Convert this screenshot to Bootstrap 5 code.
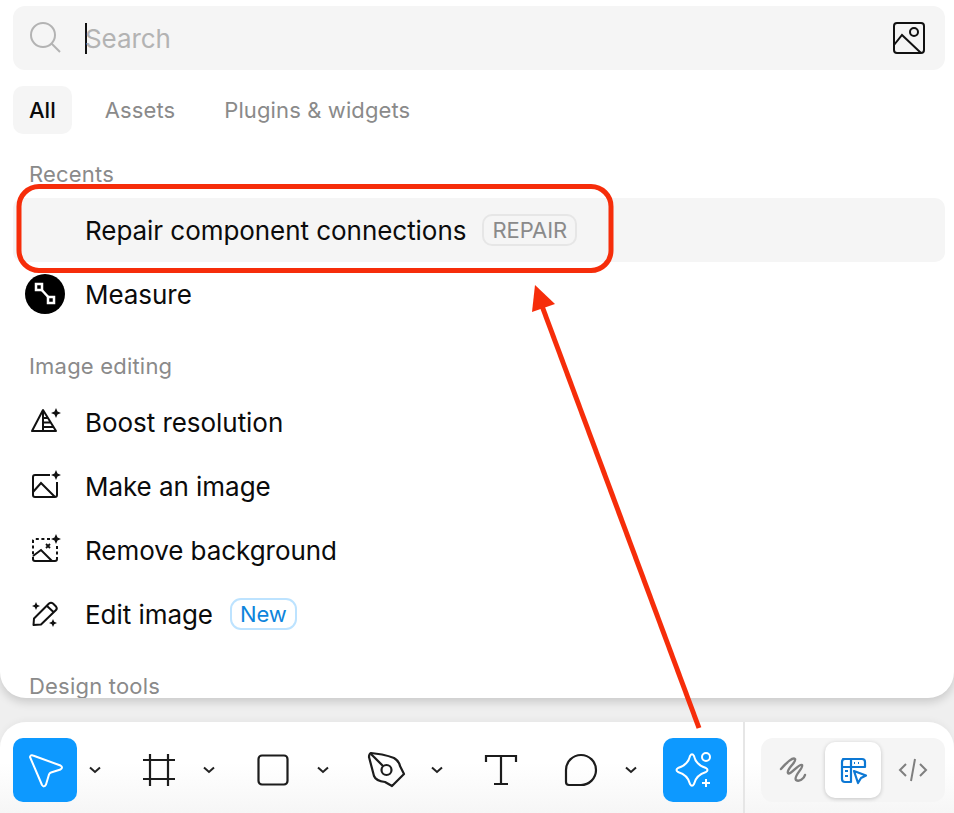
<!doctype html>
<html lang="en">
<head>
<meta charset="utf-8">
<title>Actions menu</title>
<link rel="stylesheet" href="https://cdn.jsdelivr.net/npm/bootstrap@5.3.0/dist/css/bootstrap.min.css">
<style>
html,body{height:100%}
body{width:954px;height:813px;overflow:hidden;background:#efefef;font-family:Inter,"Liberation Sans",sans-serif;font-size:24px;color:#0b0b0b;position:relative}
.panel-top{height:698px;overflow:hidden;background:#fff;border-radius:0 0 26px 26px;padding:6px 9px 0 13px;box-shadow:0 4px 10px rgba(0,0,0,.16)}
.search-box{height:64px;background:#f5f5f5;border-radius:12px;padding:0 20px 0 17px}
.search-gap{width:23px}
.caret-bar{width:2px;height:31px;background:#111}
.search-word{color:#b3b3b3;margin-left:-2px;font-size:26px;letter-spacing:-.1px}
.tab-row{height:48px;margin-top:16px}
.tab-item{height:48px;display:flex;align-items:center;padding:0 16px;border-radius:10px;color:#8a8a8a;font-size:22px;letter-spacing:.12px}
.tab-item.is-on{background:#f5f5f5;color:#0b0b0b;font-weight:500;margin-right:17px;letter-spacing:0}
.tab-item.tab-gap{margin-right:17px}
.sec-label{height:48px;display:flex;align-items:center;padding-left:16px;color:#8a8a8a;font-size:22px;letter-spacing:.2px}
.sec-next{margin-top:16px}
.menu-row{height:64px;border-radius:10px;display:flex;align-items:center;font-size:26px;letter-spacing:-.05px}
.menu-row.is-hl{background:#f5f5f5}
.icon-slot{width:72px;flex:none;display:flex;align-items:center;justify-content:center;padding-right:8px}
.tag-grey,.tag-new{height:32px;display:flex;align-items:center;margin-left:16px;border-radius:10px;border:2px solid #e6e6e6;padding:0 8px;font-size:22px;color:#8a8a8a}
.tag-new{border-color:#bde3ff;color:#0d84dc;border-radius:11px;margin-left:17px}
.tool-bar{height:91px;margin-top:24px;background:linear-gradient(#fff 45%,#f6f6f6);border-radius:26px 26px 0 0;padding:16px 9px 0 13px;box-shadow:0 -2px 6px rgba(0,0,0,.04)}
.tool-btn{width:64px;height:64px;flex:none;display:flex;align-items:center;justify-content:center;border-radius:10px}
.tool-btn.is-blue{background:#0d99ff}
.tool-chev{width:50px;flex:none;height:64px;display:flex;align-items:center;justify-content:flex-start;padding-left:12px}
.tool-space{width:16px;flex:none}
.tool-sep{width:2px;height:91px;margin-top:-16px;background:#e6e6e6;margin-left:16px;margin-right:16px;flex:none}
.seg-wrap{width:184px;height:64px;background:#f5f5f5;border-radius:12px;padding:4px 0;justify-content:center;flex:none}
.seg-btn{width:56px;height:56px;border-radius:10px;display:flex;align-items:center;justify-content:center;margin:0 2px}
.seg-btn.is-on{background:#fff;box-shadow:0 1px 4px rgba(0,0,0,.2)}
.over-marks{position:absolute;left:0;top:0;pointer-events:none}
svg{display:block;overflow:visible}
</style>
</head>
<body>
<div class="panel-top">
  <div class="search-box d-flex align-items-center">
    <svg width="32" height="32" viewBox="0 0 32 32" fill="none" stroke="#b3b3b3" stroke-width="2"><circle cx="13" cy="13" r="12"/><path d="M21.500 21.500 30 30"/></svg>
    <div class="search-gap"></div>
    <div class="caret-bar"></div>
    <div class="search-word flex-grow-1">Search</div>
    <svg width="32" height="32" viewBox="0 0 32 32" fill="none" stroke="#111" stroke-width="2"><rect x="1" y="1" width="30" height="30" rx="3"/><circle cx="21" cy="10" r="4"/><path d="M1 23 9 13 28 31"/></svg>
  </div>
  <div class="tab-row d-flex align-items-center">
    <div class="tab-item is-on">All</div>
    <div class="tab-item tab-gap">Assets</div>
    <div class="tab-item">Plugins &amp; widgets</div>
  </div>
  <div class="sec-label sec-next">Recents</div>
  <div class="menu-row is-hl"><div class="icon-slot"></div>Repair component connections<span class="tag-grey">REPAIR</span></div>
  <div class="menu-row">
    <div class="icon-slot"><svg width="40" height="40" viewBox="0 0 40 40"><circle cx="20" cy="20" r="20" fill="#000"/><path d="M14 13 26 26" stroke="#fff" stroke-width="2.500"/><rect x="11" y="10" width="6" height="6" fill="#000" stroke="#fff" stroke-width="2.500"/><rect x="23" y="23" width="6" height="6" fill="#000" stroke="#fff" stroke-width="2.500"/></svg></div>
    Measure</div>
  <div class="sec-label sec-next">Image editing</div>
  <div class="menu-row">
    <div class="icon-slot"><svg width="32" height="26" viewBox="0 0 32 26" fill="none" stroke="#111" stroke-width="2" stroke-linejoin="round"><path d="M14 1 3 22H27L14 1ZM14 1V22M14 9H19M14 13.500H22M14 18H25"/><path d="M27 -1 28.500 2.500 32 4 28.500 5.500 27 9 25.500 5.500 22 4 25.500 2.500Z" fill="#111" stroke="none"/></svg></div>
    Boost resolution</div>
  <div class="menu-row">
    <div class="icon-slot"><svg width="32" height="32" viewBox="0 -2 32 32" fill="none" stroke="#111" stroke-width="2"><path d="M21 3H6Q4 3 4 5V23Q4 25 6 25H26Q28 25 28 23V10"/><path d="M4 20 12 11 26 25"/><path d="M27 -2 28.500 1.500 32 3 28.500 4.500 27 8 25.500 4.500 22 3 25.500 1.500Z" fill="#111" stroke="none"/></svg></div>
    Make an image</div>
  <div class="menu-row">
    <div class="icon-slot"><svg width="32" height="32" viewBox="0 -2 32 32" fill="none" stroke="#111" stroke-width="2"><path d="M21 3H6Q4 3 4 5V23M28 10V23" stroke-dasharray="3 2.600"/><path d="M4 20 12 14 23 25M4 22V23Q4 25 6 25H26Q28 25 28 23V21"/><path d="M17 8 21 12M21 8 17 12" stroke-width="1.800"/><path d="M27 -2 28.500 1.500 32 3 28.500 4.500 27 8 25.500 4.500 22 3 25.500 1.500Z" fill="#111" stroke="none"/></svg></div>
    Remove background</div>
  <div class="menu-row">
    <div class="icon-slot"><svg width="32" height="30" viewBox="0 0 32 30" fill="none" stroke="#111" stroke-width="2" stroke-linejoin="round"><path d="M4.500 26 5 19.500 20 4.500Q22 3 24 4.500L27 7.500Q28.500 9.500 27 11L12 25.500ZM18 7 25 13.500"/><path d="M7 3 8.200 5.800 11 7 8.200 8.200 7 11 5.800 8.200 3 7 5.800 5.800ZM24 20 25.200 22.800 28 24 25.200 25.200 24 28 22.800 25.200 20 24 22.800 22.800Z" fill="#111" stroke="none"/></svg></div>
    Edit image<span class="tag-new">New</span></div>
  <div class="sec-label sec-next">Design tools</div>
</div>
<div class="tool-bar d-flex">
  <div class="tool-btn is-blue"><svg width="36" height="36" viewBox="0 0 36 36" fill="none" stroke="#fff" stroke-width="2" stroke-linejoin="round"><path d="M3 5Q3.500 2.500 6 3.500L33.500 13.500Q36.500 15.500 33.500 17.500L24 20.500Q22.500 21 22 22.500L19 32.500Q17 36 15 33Z"/></svg></div>
  <div class="tool-chev"><svg width="12" height="8" viewBox="0 0 12 8" fill="none" stroke="#222" stroke-width="2"><path d="M1 1.500 6 6 11 1.500"/></svg></div>
  <div class="tool-btn"><svg width="34" height="34" viewBox="0 0 34 34" fill="none" stroke="#1c1c1c" stroke-width="2.200"><path d="M8 1V33M26 1V33M1 7H33M1 26H33"/></svg></div>
  <div class="tool-chev"><svg width="12" height="8" viewBox="0 0 12 8" fill="none" stroke="#222" stroke-width="2"><path d="M1 1.500 6 6 11 1.500"/></svg></div>
  <div class="tool-btn"><svg width="32" height="32" viewBox="0 0 32 32" fill="none" stroke="#1c1c1c" stroke-width="2.200"><rect x="1.500" y="1.500" width="29" height="29" rx="3.500"/></svg></div>
  <div class="tool-chev"><svg width="12" height="8" viewBox="0 0 12 8" fill="none" stroke="#222" stroke-width="2"><path d="M1 1.500 6 6 11 1.500"/></svg></div>
  <div class="tool-btn"><svg width="38" height="36" viewBox="0 0 38 36" fill="none" stroke="#1c1c1c" stroke-width="2.200" stroke-linejoin="round"><path d="M3 1 14 2.500Q21 4 26 6 31 9 32 14L36 22 24 34 17 30Q8 29 6 24L1 5Q1 2 3 1Z"/><path d="M3 2 15 14"/><circle cx="18.500" cy="18" r="5"/></svg></div>
  <div class="tool-chev"><svg width="12" height="8" viewBox="0 0 12 8" fill="none" stroke="#222" stroke-width="2"><path d="M1 1.500 6 6 11 1.500"/></svg></div>
  <div class="tool-btn"><svg width="34" height="32" viewBox="0 0 34 32" fill="none" stroke="#1c1c1c" stroke-width="2.200"><path d="M2 8V2H32V8M17 2V30M10 30H24"/></svg></div>
  <div class="tool-space"></div>
  <div class="tool-btn"><svg width="34" height="34" viewBox="0 0 34 34" fill="none" stroke="#1c1c1c" stroke-width="2.200"><path d="M2 17A15 15 0 1 1 17 32H5Q2 32 2 29Z"/></svg></div>
  <div class="tool-chev"><svg width="12" height="8" viewBox="0 0 12 8" fill="none" stroke="#222" stroke-width="2"><path d="M1 1.500 6 6 11 1.500"/></svg></div>
  <div class="tool-btn is-blue"><svg width="40" height="40" viewBox="0 0 40 40" fill="none" stroke="#fff" stroke-width="2" stroke-linejoin="round"><path d="M15 6Q17 2.500 19 6 21 15 31 18Q34 20 31 22 21 25 19 34Q17 37.500 15 34 13 25 3 22Q0 20 3 18 13 15 15 6Z"/><circle cx="31" cy="7" r="4"/><path d="M31 29V37M27 33H35"/></svg></div>
  <div class="tool-sep"></div>
  <div class="seg-wrap d-flex">
    <div class="seg-btn"><svg width="28" height="28" viewBox="0 0 28 28" fill="none" stroke="#7f7f7f" stroke-width="2.400" stroke-linecap="round"><path d="M2 13C8 6 14 1 16 3 18 6 7 13 9 17 11 20 20 7 23 9 25 12 14 20 17 24 20 26 25 23 26 19"/></svg></div>
    <div class="seg-btn is-on"><svg width="28" height="28" viewBox="0 0 28 28" fill="none" stroke="#0d78d4" stroke-width="2.200" stroke-linejoin="round"><path d="M4 3H23Q26 3 26 6V11H12V26H6Q3 26 3 23V6Q3 3 6 3ZM3 11H12V3M15 7H16M19 7H20M6 15H9M6 20H9"/><path d="M15 15 27 19.500 22 22 19 27Z"/></svg></div>
    <div class="seg-btn"><svg width="28" height="24" viewBox="0 0 28 24" fill="none" stroke="#7f7f7f" stroke-width="2"><path d="M7 6 1 12 7 18M21 6 27 12 21 18M16 1 12 23"/></svg></div>
  </div>
</div>
<svg class="over-marks" width="954" height="813" viewBox="0 0 954 813" fill="none">
  <rect x="19" y="186.500" width="592" height="84" rx="20" stroke="#f62d0a" stroke-width="5"/>
  <path d="M699 728 542 306" stroke="#f62d0a" stroke-width="5"/>
  <path d="M535 285 555 304 532 312Z" fill="#f62d0a"/>
</svg>
<script src="https://cdn.jsdelivr.net/npm/bootstrap@5.3.0/dist/js/bootstrap.bundle.min.js"></script>
</body>
</html>
